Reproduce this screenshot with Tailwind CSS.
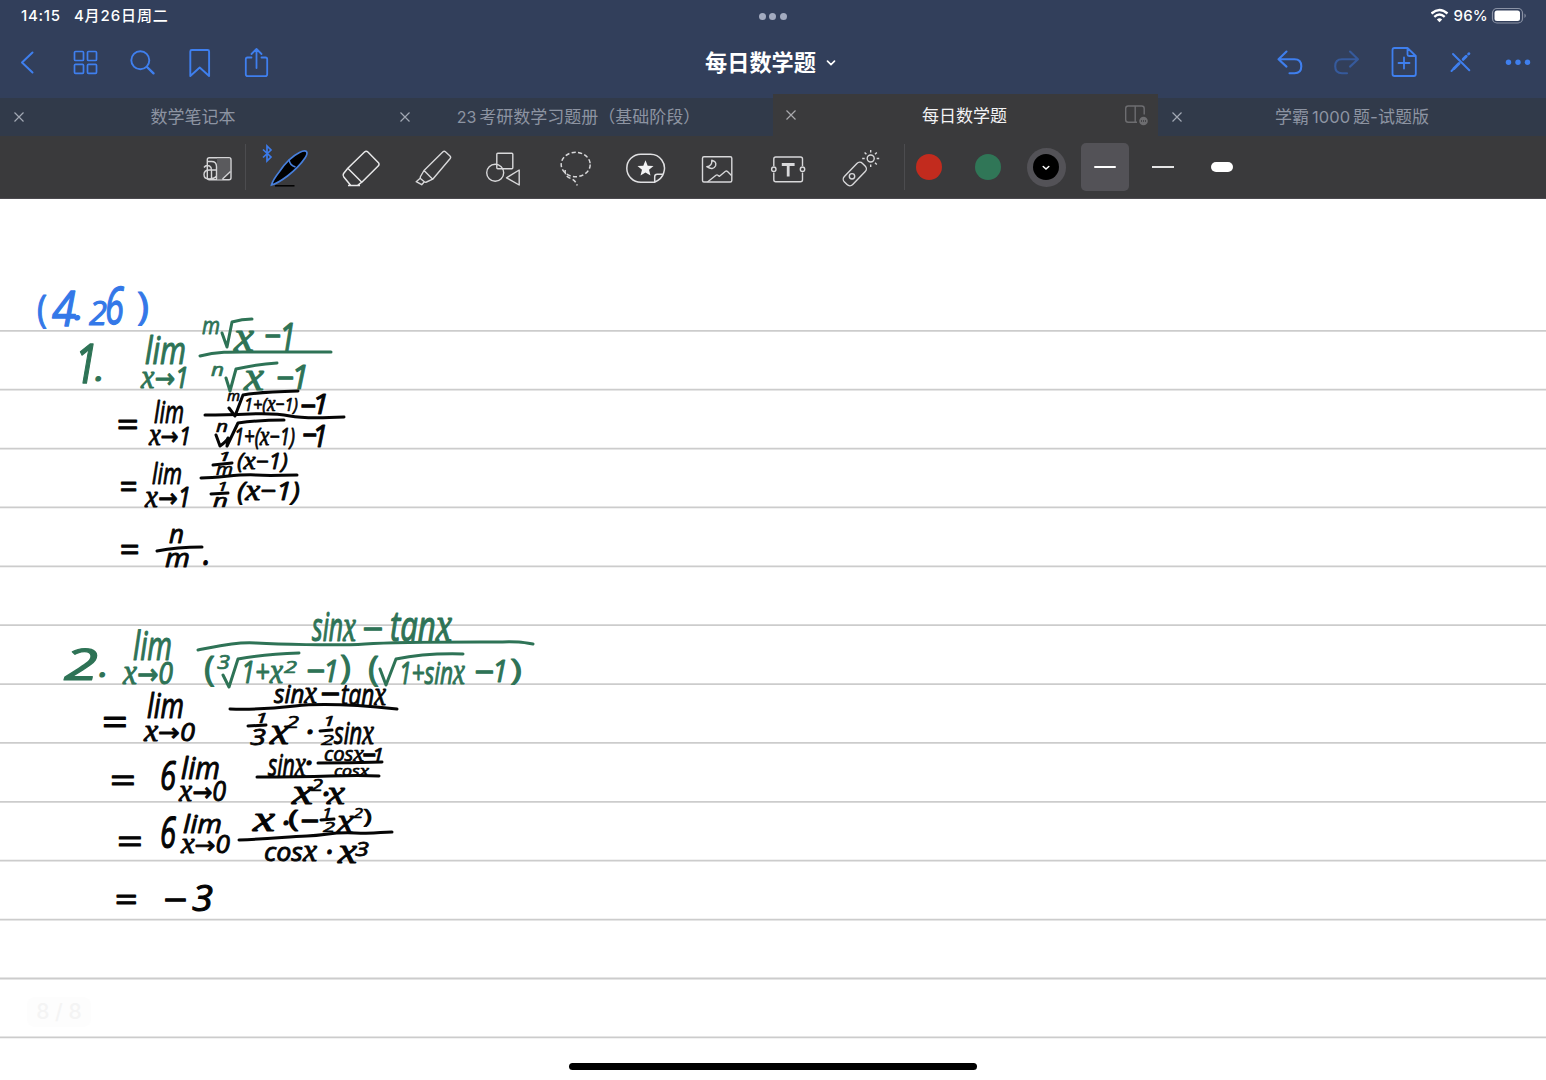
<!DOCTYPE html>
<html lang="zh-CN">
<head>
<meta charset="utf-8">
<title>每日数学题</title>
<script src="https://cdn.jsdelivr.net/npm/@tailwindcss/browser@4"></script>
</head>
<body class="w-[1546px] h-[1080px] overflow-hidden bg-white font-['Inter','Noto_Sans_CJK_SC',sans-serif]">
<div class="relative flex flex-col w-[1546px] h-[1080px]">

  <!-- status bar and navigation -->
  <header class="h-[98px] bg-[#323f5b] flex flex-col shrink-0">
    <div class="h-[37px] grid grid-cols-3 pt-[6px] text-white text-[15px] font-medium leading-[19px]">
      <div class="flex pl-[21px] gap-[13px]"><span class="tracking-[0.75px]">14:15</span><span class="tracking-[0.9px]">4月26日周二</span></div>
      <div class="flex justify-center gap-[3.5px] pt-[7px]">
        <i class="size-[7px] rounded-full bg-[#a3abc0]"></i><i class="size-[7px] rounded-full bg-[#a3abc0]"></i><i class="size-[7px] rounded-full bg-[#a3abc0]"></i>
      </div>
      <div class="flex justify-end pr-[20px] items-start">
        <svg class="w-[18px] h-[19px] mr-[5px]" viewBox="1431 6 18 19" fill="none" stroke="#fff" stroke-width="2.4"><path d="M1431.5 13.5q8-7 16 0M1434.3 16.8q5.200-4.600 10.400 0"/><path d="M1436.800 19.400q2.700-2.300 5.400 0l-2.700 2.900z" fill="#fff" stroke="none"/></svg>
        <span class="mr-[3px] tracking-[0.2px]">96%</span>
        <svg class="w-[35px] h-[19px]" viewBox="1491 6 35 19"><rect x="1492.500" y="8.500" width="30" height="14.500" rx="4.500" fill="none" stroke="#8b93a6" stroke-width="1.200"/><rect x="1494.500" y="10.500" width="25.500" height="10.500" rx="2.500" fill="#fff"/><path d="M1524.500 13.500q2.500 2.200 0 4.500z" fill="#8b93a6"/></svg>
      </div>
    </div>
    <nav class="h-[50px] flex justify-between items-center">
      <div class="flex w-[285px]">
        <svg class="w-[57px] h-[50px]" viewBox="0 37 57 50" fill="none" stroke="#3f7fee" stroke-width="2" stroke-linecap="round" stroke-linejoin="round"><path d="M32.500 52.500l-10.500 10 10.500 10"/></svg>
        <svg class="w-[57px] h-[50px]" viewBox="57 37 57 50" fill="none" stroke="#3f7fee" stroke-width="1.700"><rect x="74.500" y="51.500" width="9" height="9" rx="1"/><rect x="87.500" y="51.500" width="9" height="9" rx="1"/><rect x="74.500" y="64.300" width="9" height="9" rx="1"/><rect x="87.500" y="64.300" width="9" height="9" rx="1"/></svg>
        <svg class="w-[57px] h-[50px]" viewBox="114 37 57 50" fill="none" stroke="#3f7fee" stroke-width="1.900" stroke-linecap="round"><circle cx="140.300" cy="60.300" r="9"/><path d="M147 67l6.500 6.300" stroke-width="2.400"/></svg>
        <svg class="w-[57px] h-[50px]" viewBox="171 37 57 50" fill="none" stroke="#3f7fee" stroke-width="1.900" stroke-linejoin="round"><path d="M190.300 76v-24.500q0-1.500 1.500-1.500h15.800q1.500 0 1.500 1.500v24.500l-9.400-8.500z"/></svg>
        <svg class="w-[57px] h-[50px]" viewBox="228 37 57 50" fill="none" stroke="#3f7fee" stroke-width="1.800" stroke-linecap="round" stroke-linejoin="round"><path d="M251.500 57.500h-4q-1.700 0-1.700 1.700v15q0 1.900 1.900 1.900h17.600q1.900 0 1.900-1.900v-15q0-1.700-1.700-1.700h-4M256.500 68v-18.500M251.500 54l5-5 5 5"/></svg>
      </div>
      <h1 class="flex items-center pr-[5px] pt-px text-white text-[22.200px] font-semibold leading-[30px]">每日数学题
        <svg class="w-[10px] h-[8px] ml-[10px]" viewBox="0 0 10 8" fill="none" stroke="#fff" stroke-width="1.700" stroke-linecap="round"><path d="M1.500 2.200l3.500 3.300 3.500-3.300"/></svg>
      </h1>
      <div class="flex w-[285px]">
        <svg class="w-[57px] h-[50px]" viewBox="1261 37 57 50" fill="none" stroke="#3f7fee" stroke-width="2.100" stroke-linecap="round" stroke-linejoin="round"><path d="M1286.500 51.500l-8 7.800 8 7.300M1279 59.300h15.500q6.800 0 6.800 7t-6.800 7h-5"/></svg>
        <svg class="w-[57px] h-[50px]" viewBox="1318 37 57 50" fill="none" stroke="#365a9c" stroke-width="2.100" stroke-linecap="round" stroke-linejoin="round"><path d="M1350 51.500l8 7.800-8 7.300M1357.500 59.300h-15.500q-6.800 0-6.800 7t6.800 7h5"/></svg>
        <svg class="w-[57px] h-[50px]" viewBox="1375 37 57 50" fill="none" stroke="#3f7fee" stroke-width="1.800" stroke-linejoin="round" stroke-linecap="round"><path d="M1407.500 48h-13q-2 0-2 2v24q0 2 2 2h19.300q2 0 2-2v-18zM1407.500 48v6.500q0 1.500 1.500 1.500h6.500M1398.500 63h11M1404 57.500v11"/></svg>
        <svg class="w-[57px] h-[50px]" viewBox="1432 37 57 50" fill="none" stroke="#3f7fee" stroke-width="2" stroke-linecap="round"><path d="M1453 54l16.300 16.300"/><path d="M1454 68.500l5-5M1463.200 59.300l3-3" stroke-width="3"/><path d="M1468.500 54l.5-.4" stroke-width="2.700"/><path d="M1451.500 71l2-2"/></svg>
        <svg class="w-[57px] h-[50px]" viewBox="1489 37 57 50" fill="#3f7fee"><circle cx="1508.500" cy="62.200" r="2.700"/><circle cx="1518" cy="62.200" r="2.700"/><circle cx="1527.500" cy="62.200" r="2.700"/></svg>
      </div>
    </nav>
  </header>

  <!-- document tabs -->
  <div class="h-[38px] flex shrink-0 items-end bg-[#313a4a] text-[17px] leading-[24px] text-[#8d94a2]">
    <div class="w-[386px] h-[38px] flex items-center pl-[14px]">
      <svg class="size-[10px]" viewBox="0 0 10 10" stroke="#a2a8b4" stroke-width="1.200"><path d="M.5.5l9 9M9.500.5l-9 9"/></svg><span class="flex-1 text-center pr-[24px]">数学笔记本</span>
    </div>
    <div class="w-[387px] h-[38px] flex items-center pl-[14px]">
      <svg class="size-[10px]" viewBox="0 0 10 10" stroke="#a2a8b4" stroke-width="1.200"><path d="M.5.5l9 9M9.500.5l-9 9"/></svg><span class="flex-1 text-center pr-[26px]"><span class="mr-[3px] text-[16px]">23</span>考研数学习题册（基础阶段）</span>
    </div>
    <div class="w-[385px] h-[42px] flex items-center pl-[13px] bg-[#3a3a3c] text-[#f2f2f4]">
      <svg class="size-[10px]" viewBox="0 0 10 10" stroke="#a9a9ad" stroke-width="1.200"><path d="M.5.5l9 9M9.500.5l-9 9"/></svg><span class="flex-1 text-center pl-[9px] pt-[2px]">每日数学题</span>
      <svg class="w-[26px] h-[24px] mr-[8px]" viewBox="1124 103 26 24" fill="none" stroke="#6d6d70" stroke-width="1.400"><path d="M1137 122.300h-8.800q-2.500 0-2.500-2.500v-11.300q0-2.500 2.500-2.500h13.500q2.500 0 2.500 2.500v6M1135.200 106v16.300"/><circle cx="1143.500" cy="121" r="4.300" fill="#6d6d70" stroke="none"/><path d="M1141 121h5" stroke="#3a3a3c" stroke-dasharray="1 1"/></svg>
    </div>
    <div class="w-[388px] h-[38px] flex items-center pl-[14px]">
      <svg class="size-[10px]" viewBox="0 0 10 10" stroke="#a2a8b4" stroke-width="1.200"><path d="M.5.5l9 9M9.500.5l-9 9"/></svg><span class="flex-1 text-center pr-[24px]">学霸<span class="mx-[3px] text-[16.500px]">1000</span>题-试题版</span>
    </div>
  </div>

  <!-- drawing tools -->
  <div class="h-[63px] flex shrink-0 items-center bg-[#3a3a3c] border-b border-[#4b494f] pl-[197px]">
    <svg class="size-[40px] mt-px" viewBox="0 0 40 40" fill="none" stroke="#d4d4d6" stroke-width="1.400"><rect x="10.300" y="9.800" width="23.700" height="22" rx="2"/><path d="M20 10.500h13v13l-8 8h-5z" fill="#5a5a5d" stroke="none"/><path d="M33.500 23.500l-8 7.500M11 13.500h3.500q5 0 5 5v12.500M19.500 22h-7q-5.500 0-5.500 4.500t5 4.500q5 0 7.500-3M7 19.500q2-3 5.500-1.500q2 1 2 4v8"/></svg>
    <i class="w-px h-[46px] ml-[8px] bg-[#4c4c4f]"></i>
    <div class="flex ml-[7px] pt-px">
      <div class="w-[71.500px] flex justify-center"><svg class="size-[40px] overflow-visible" viewBox="0 0 40 40" fill="none"><path d="M6 37.800h19.500" stroke="#000" stroke-width="1.500"/><path d="M2.500 37q1-4.500 8-13.500 9-13.500 20-19 5-2.500 7-1 1.500 2-1.500 6.500-6 9-17.500 18-10 7.500-16 9z" fill="#000" stroke="#477fdb" stroke-width="1.700"/><path d="M20 11.500q.5 5.500 6.500 7.500" stroke="#477fdb" stroke-width="1.700"/><path d="M-6 1.500l8 7.500-4 4v-15l4 4-8 7.500" stroke="#3c7bea" stroke-width="1.700"/></svg></div>
      <div class="w-[71.500px] flex justify-center"><svg class="size-[40px] overflow-visible" viewBox="0 0 40 40" fill="none" stroke="#e8e8e9" stroke-width="1.500" stroke-linejoin="round"><path d="M24.500 4q1.700-1.700 3.400 0l10.300 10.600q1.700 1.700 0 3.400l-16.400 16.200-14-14zM7.800 20.200l-4.200 5.300q-1.200 2 .2 3.500l7 8.500h6.500l4.500-3.300M8 37.500h12"/></svg></div>
      <div class="w-[71.500px] flex justify-center"><svg class="size-[40px]" viewBox="0 0 40 40" fill="none" stroke="#d8d8da" stroke-width="1.400" stroke-linejoin="round"><path d="M31 3.800q1.200-1.100 2.400 0l4.600 4.200q1.200 1.200.2 2.500l-17.500 20.700-8.700-8.700zM12 22.500l-3.500 6q-.7 1.400.5 2.500l3.300 2.700q1 .8 2.200.3l6.200-2.800M8.500 30l-4.300 3.700 5.500 3 2.700-3"/></svg></div>
      <div class="w-[71.500px] flex justify-center"><svg class="size-[40px]" viewBox="0 0 40 40" fill="none" stroke="#d8d8da" stroke-width="1.400" stroke-linejoin="round"><circle cx="12.200" cy="24.800" r="8.500"/><rect x="13.800" y="5.200" width="16" height="15.600" rx="1"/><path d="M23.500 29.800l12.700-7.800v15z"/></svg></div>
      <div class="w-[71.500px] flex justify-center"><svg class="size-[40px]" viewBox="0 0 40 40" fill="none" stroke="#d8d8da" stroke-width="1.500" stroke-dasharray="4.200 2.300"><ellipse cx="20.700" cy="16.500" rx="14.500" ry="12.200"/><path d="M10.200 22q-1 6 5.500 8.500 5 2 6.500 7"/></svg></div>
      <div class="w-[71.500px] flex justify-center"><svg class="size-[40px]" viewBox="0 0 40 40" fill="none" stroke="#e0e0e2" stroke-width="1.500" stroke-linejoin="round"><path d="M28.500 34.200h-13.700a14 14 0 010-28h9.400a14 14 0 0113.500 18.500q-1.500 6-9.200 9.500zM28.700 34v-5.200q0-2.500 2.500-2.500h6"/><path d="M19.500 12.300l2.200 5.400 5.800.4-4.500 3.700 1.500 5.700-5-3.100-5 3.100 1.500-5.700-4.500-3.700 5.800-.4z" fill="#f3f3f4" stroke="none"/></svg></div>
      <div class="w-[71.500px] flex justify-center"><svg class="size-[40px]" viewBox="0 0 40 40" fill="none" stroke="#d8d8da" stroke-width="1.400" stroke-linejoin="round"><rect x="4.500" y="8.800" width="29.300" height="25.200" rx="1.500"/><path d="M9.500 34l8.500-6.700q1-.8 2 0l1.500 1 6-5q1-.7 2 .2l4 4M13.800 12.200q5 1.300 3.800 5.500-2.500 5-8.800 1 5.500-.7 5-6.500z"/></svg></div>
      <div class="w-[71.500px] flex justify-center"><svg class="size-[40px]" viewBox="0 0 40 40" fill="none" stroke="#d8d8da" stroke-width="1.400"><path d="M4.800 18v-7q0-2 2-2h24.700q2 0 2 2v7M4.800 24.500v7.300q0 2 2 2h24.700q2 0 2-2v-7.300"/><circle cx="4.800" cy="21.200" r="2.200"/><circle cx="33.500" cy="21.200" r="2.200"/><path d="M12.800 16.500h12.800M19.200 16v12.500" stroke-width="2.800"/></svg></div>
      <div class="w-[71.500px] flex justify-center"><svg class="size-[40px] overflow-visible" viewBox="0 0 40 40" fill="none" stroke="#d8d8da" stroke-width="1.400"><rect x="8" y="13" width="11.600" height="26" rx="4" transform="rotate(44 13.800 26)"/><circle cx="11" cy="28.300" r="2.700"/><circle cx="29.700" cy="10.500" r="3.500"/><path d="M29.700 4.500v-2.500M29.700 16.500v2.500M35.700 10.500h2.500M23.700 10.500h-2.500M34 6.200l1.800-1.800M25.400 6.200l-1.800-1.800M34 14.800l1.800 1.800"/></svg></div>
    </div>
    <i class="w-px h-[46px] ml-[7.500px] bg-[#4c4c4f]"></i>
    <div class="flex items-center -ml-[5px]">
      <div class="w-[58.600px] flex justify-center"><i class="size-[26px] rounded-full bg-[#c22b1e]"></i></div>
      <div class="w-[58.600px] flex justify-center"><i class="size-[26px] rounded-full bg-[#307657]"></i></div>
      <div class="w-[58.600px] flex justify-center"><div class="size-[39px] rounded-full bg-[#535257] flex items-center justify-center"><div class="size-[26px] rounded-full bg-black flex items-center justify-center"><svg class="w-[8px] h-[6px] mt-[2px]" viewBox="0 0 8 6" fill="none" stroke="#fff" stroke-width="1.500" stroke-linecap="round"><path d="M1.200 1.500l2.800 2.500 2.800-2.500"/></svg></div></div></div>
      <div class="w-[58.400px] flex justify-center"><div class="size-[48px] rounded-[5px] bg-[#535257] flex items-center justify-center"><i class="w-[22px] h-[2px] rounded-full bg-white"></i></div></div>
      <div class="w-[58.400px] flex justify-center"><i class="w-[22px] h-[1.500px] bg-[#e4e4e5]"></i></div>
      <div class="w-[58.400px] flex justify-center"><i class="w-[22px] h-[10px] rounded-full bg-white"></i></div>
    </div>
  </div>

  <!-- ruled page -->
  <main class="flex-1 min-h-0 bg-white">
    <svg id="page" class="block w-[1546px] h-[881px]" viewBox="0 199 1546 881">
      <g id="rules" stroke="#cccccc" stroke-width="1.800"></g>
      <g id="ink" class="italic font-['Open_Sans',sans-serif]" stroke-linecap="round" stroke-linejoin="round"></g>
    </svg>
  </main>

  <div class="absolute left-[27px] top-[997px] w-[64px] h-[30px] rounded-[8px] bg-[#fdfdfd] flex items-center justify-center text-[21px] font-medium text-[#f4f4f4]">8 / 8</div>
  <div class="absolute left-[569px] top-[1063px] w-[408px] h-[7px] rounded-full bg-black"></div>
</div>

<script>
const NS = 'http://www.w3.org/2000/svg';
const add = (parent, tag, attrs) => {
  const el = document.createElementNS(NS, tag);
  for (const k in attrs) el.setAttribute(k, attrs[k]);
  parent.appendChild(el);
  return el;
};
const rules = document.getElementById('rules');
for (let i = 0; i < 13; i++) { const y = 330.8 + i * 58.88; add(rules, 'line', {x1: 0, x2: 1546, y1: y, y2: y}); }

const BLUE = '#3478e8', GREEN = '#2e7356', BLACK = '#050505';
const ink = document.getElementById('ink');

// text entries: [text, left, right, top, bottom]
function write(color, entries) {
  for (const [t, l, r, top, bottom] of entries) {
    const h = bottom - top;
    let size = h / 0.73, base = bottom;
    if (t === '=') { size = h / 0.37; base = bottom + size * 0.19; }
    else if (t === '−') { size = 34; base = top + size * 0.36; }
    else if (t === '·') { size = 32; base = top + size * 0.37; }
    else if (t === '.') { size = 34; }
    else if (/[()]/.test(t)) { size = h / 0.9; base = bottom - size * 0.15; }
    else if (t === 'x') { size = h / 0.58; }
    else if (/^[mn]$/.test(t)) { size = h / 0.54; }
    const upright = t === '(' || t === ')';
    const el = add(ink, 'text', {x: l, y: base, 'font-size': size, fill: color, stroke: color,
      'font-style': upright ? 'normal' : 'italic',
      'stroke-width': Math.min(1.3, 0.35 + size * 0.02), textLength: r - l, lengthAdjust: 'spacingAndGlyphs'});
    for (const run of t.split(/([x→])/).filter(Boolean)) {
      const attrs = run === 'x' ? {'font-family': 'Liberation Serif', 'font-size': size * 1.18}
        : run === '→' ? {'font-family': 'DejaVu Sans', 'font-size': size * 0.95} : {};
      add(el, 'tspan', attrs).textContent = run;
    }
  }
}
function strokes(color, width, list) {
  for (const d of list) add(ink, 'path', {d, fill: 'none', stroke: color, 'stroke-width': width});
}

write(BLUE, [['(',37,47,295,329],['4',52,76,290,326],['.',74,84,0,320],['2',89,107,301,325],['6',105,124,286,324],[')',137,149,291,326]]);
write(GREEN, [
  ['1',74,98,343,383],['.',95,105,0,381],['lim',145,186,336,364],['x→1',141,189,367,388],
  ['m',202,220,321,334],['x',234,254,329,351],['−',264,281,336,0],['1',279,296,323,352],
  ['n',211,224,366,376],['x',244,264,370,390],['−',276,294,378,0],['1',291,309,365,389],
  ['2',64,98,648,680],['.',99,109,0,677],['lim',133,172,631,660],['x→0',123,173,662,684],
  ['sinx',312,356,612,641],['−',362,383,629,0],['tanx',390,452,610,641],
  ['(',204,215,655,686],['3',217,230,655,669],['1+x',241,283,661,683],['2',284,297,661,673],['−',306,325,671,0],['1',323,339,659,682],[')',340,351,655,684],
  ['(',368,379,655,686],['1+sinx',399,465,661,684],['−',474,494,672,0],['1',492,508,659,682],[')',510,522,657,684]
]);
strokes(GREEN, 3, [
  'M200 356C220 351 235 352 260 352S310 352 331 352','M222 333L227 347L232 322Q242 319 252 319',
  'M226 378L230 391L236 369Q258 364 277 363',
  'M198 650C224 645 238 642 256 643S335 646 365 644S440 642 480 642S515 641 533 644',
  'M223 675L229 687L238 659Q265 654 299 653','M380 669L386 685L396 659Q425 653 463 654'
]);
write(BLACK, [
  ['=',116,138,418,430],['lim',154,184,401,423],['x→1',149,191,426,445],
  ['m',227,240,393,401],['1+(x−1)',244,298,397,414],['−',300,316,406,0],['1',312,329,394,414],
  ['n',216,228,423,432],['1+(x−1)',234,295,427,448],['−',302,317,435,0],['1',312,328,425,447],
  ['=',119,137,480,492],['lim',152,182,463,484],['x→1',145,191,487,507],
  ['1',218,231,452,461],['m',216,233,466,475],['(x−1)',237,288,453,472],
  ['1',217,228,482,491],['n',213,228,497,507],['(x−1)',237,300,481,504],
  ['=',119,139,543,555],['n',169,184,529,543],['m',165,190,553,567],['.',203,211,0,565],
  ['=',101,127,714,728],['lim',147,184,693,718],['x→0',144,195,722,741],
  ['sinx',274,317,684,703],['−',320,340,694,0],['tanx',341,386,684,705],
  ['1',255,268,712,723],['3',250,266,729,745],['x',270,289,725,744],['2',286,299,716,728],['·',305,314,731,0],['1',323,335,715,726],['2',321,334,734,745],['sinx',334,374,722,744],
  ['=',109,135,773,786],['6',160,176,761,790],['lim',181,220,757,779],['x→0',179,226,781,801],
  ['sinx',268,306,754,776],['·',304,313,762,0],['cosx',324,364,747,761],['−',362,376,755,0],['1',372,384,748,762],['cosx',334,369,766,776],
  ['x',292,313,786,804],['2',311,323,779,791],['·',321,330,793,0],['x',327,345,787,804],
  ['=',116,142,834,847],['6',160,176,816,848],['lim',183,222,814,833],['x→0',181,230,835,853],
  ['x',253,275,813,831],['·',281,290,822,0],['(',288,299,809,831],['−',300,319,821,0],['1',322,332,808,818],['2',323,335,822,832],['x',337,354,815,833],['2',353,363,808,818],[')',363,372,808,826],
  ['cosx',264,317,842,861],['·',325,333,851,0],['x',338,357,845,863],['3',355,369,841,856],
  ['=',114,137,893,905],['−',163,187,900,0],['3',192,213,885,911]
]);
strokes(BLACK, 3, [
  'M205 415Q225 415 250 414T290 416T344 417','M229 408L235 416L243 395Q258 392 298 391','M216 435L220 446Q227 441 228 438L227 446L238 423Q260 420 284 420',
  'M213 465L232 463','M201 478C225 477 240 474 256 475S280 475 297 475','M211 494L228 493',
  'M157 551Q177 547 202 547',
  'M230 709Q260 710 295 706T397 709','M248 726L266 725','M320 731L332 730',
  'M257 777Q300 777 330 776T379 776','M318 763Q350 763 382 762',
  'M239 840C270 839 285 837 307 836S330 832 355 833S378 832 392 832','M321 820L334 819'
]);
</script>
</body>
</html>
